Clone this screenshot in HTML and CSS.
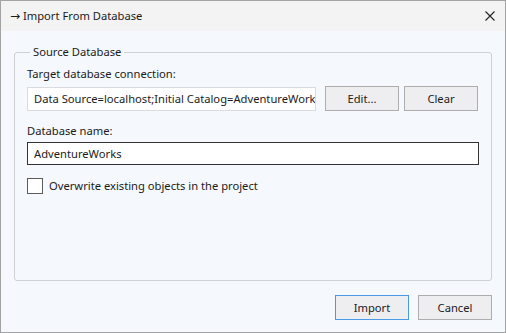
FILE: index.html
```html
<!DOCTYPE html>
<html lang="en">
<head>
  <meta charset="UTF-8">
  <title>Import From Database</title>
  <link rel="stylesheet" href="styles.css">
</head>
<body>

<div class="window">
  <div class="titlebar">
    <span class="title"><span class="arrow">→</span> Import From Database</span>
    <svg class="close" width="10" height="10" viewBox="0 0 10 10">
      <path d="M0.5 0.5 L9.5 9.5 M9.5 0.5 L0.5 9.5" stroke="#222" stroke-width="1.1" fill="none"/>
    </svg>
  </div>

  <div class="content">
    <fieldset class="group">
      <legend>Source Database</legend>

      <div class="label">Target database connection:</div>
      <div class="conn-row">
        <div class="textbox readonly">Data Source=localhost;Initial Catalog=AdventureWorks</div>
        <button class="btn">Edit...</button>
        <button class="btn">Clear</button>
      </div>

      <div class="label label-db">Database name:</div>
      <div class="textbox focused">AdventureWorks</div>

      <label class="check">
        <span class="box"></span>
        Overwrite existing objects in the project
      </label>
    </fieldset>

    <div class="actions">
      <button class="btn default">Import</button>
      <button class="btn">Cancel</button>
    </div>
  </div>
</div>

</body>
</html>
```

FILE: styles.css
```css
body {
  margin: 0;
  font-family: "Noto Sans", "Open Sans", sans-serif;
  font-size: 11.2px;
  color: #1b1b1b;
}
.window {
  width: 506px;
  height: 333px;
  box-sizing: border-box;
  border: 1px solid #a3a3a3;
  display: flex;
  flex-direction: column;
}
.titlebar {
  height: 30px;
  background-color: #f3f3f3;
  display: flex;
  align-items: center;
  justify-content: space-between;
  padding: 0 10px 0 9px;
  flex-shrink: 0;
}
.title {
  line-height: 16px;
}
.arrow {
  font-family: "DejaVu Sans", sans-serif;
  font-size: 12px;
}
.content {
  flex: 1;
  background-color: #f5f8fc;
  display: flex;
  flex-direction: column;
  padding: 13px 13px 12px 13px;
}
.group {
  flex: 1;
  margin: 0;
  border: 1px solid #cdd1d6;
  border-radius: 3px;
  padding: 0 12px;
}
.group legend {
  padding: 0 3px;
  margin-left: 3px;
  line-height: 16px;
}
.label {
  line-height: 16px;
  margin-top: 6px;
}
.label-db {
  margin-top: 12px;
}
.conn-row {
  display: flex;
  align-items: center;
  margin-top: 4px;
}
.textbox {
  box-sizing: border-box;
  background: #fff;
  padding: 0 6px;
  white-space: nowrap;
  overflow: hidden;
}
.textbox.readonly {
  width: 289px;
  height: 24px;
  line-height: 22px;
  border: 1px solid #d9dbde;
  margin-right: 9px;
}
.textbox.focused {
  height: 23px;
  line-height: 21px;
  border: 1px solid #333;
  margin-top: 3px;
}
.btn {
  box-sizing: border-box;
  width: 74px;
  height: 25px;
  background-color: #eeedf0;
  border: 1px solid #adadad;
  font-family: inherit;
  font-size: 11.2px;
  color: #1b1b1b;
  padding: 0;
}
.conn-row .btn + .btn {
  margin-left: 5px;
}
.check {
  display: flex;
  align-items: center;
  margin-top: 13px;
  line-height: 16px;
}
.box {
  width: 16px;
  height: 16px;
  box-sizing: border-box;
  border: 1px solid #5c5c5c;
  background: #fff;
  margin-right: 6px;
}
.actions {
  display: flex;
  justify-content: flex-end;
  gap: 9px;
  margin-top: 14px;
}
.btn.default {
  border-color: #4a9ae6;
}
```
